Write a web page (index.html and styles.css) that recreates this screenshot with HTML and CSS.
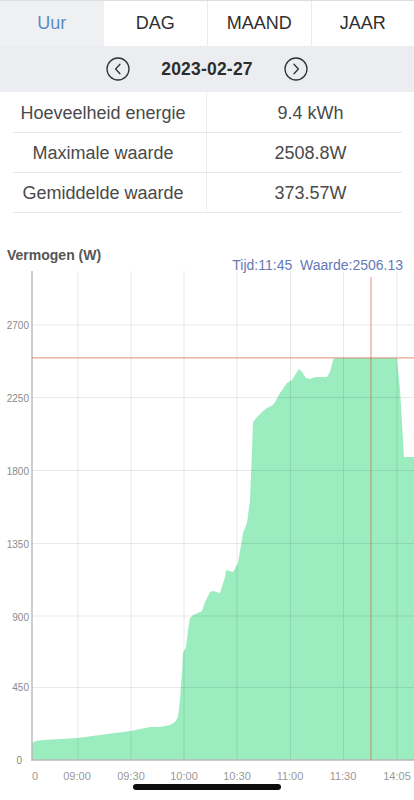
FILE: index.html
```html
<!DOCTYPE html>
<html lang="nl">
<head>
<meta charset="utf-8">
<title>Vermogen</title>
<link rel="stylesheet" href="styles.css">
</head>
<body>
<div class="tabs">
  <div class="tab active">Uur</div>
  <div class="tab">DAG</div>
  <div class="tab sep">MAAND</div>
  <div class="tab sep">JAAR</div>
</div>
<div class="datebar">
  <svg class="nav" viewBox="0 0 24 24" width="24" height="24"><circle cx="12" cy="12" r="11" fill="none" stroke="#333" stroke-width="1.3"/><path d="M14 7.2 L9.6 12 L14 16.8" fill="none" stroke="#333" stroke-width="1.3" stroke-linecap="round" stroke-linejoin="round"/></svg>
  <div class="date">2023-02-27</div>
  <svg class="nav" viewBox="0 0 24 24" width="24" height="24"><circle cx="12" cy="12" r="11" fill="none" stroke="#333" stroke-width="1.3"/><path d="M10 7.2 L14.4 12 L10 16.8" fill="none" stroke="#333" stroke-width="1.3" stroke-linecap="round" stroke-linejoin="round"/></svg>
</div>
<div class="stats">
  <div class="row"><div class="cell label">Hoeveelheid energie</div><div class="cell">9.4 kWh</div></div>
  <div class="row"><div class="cell label">Maximale waarde</div><div class="cell">2508.8W</div></div>
  <div class="row"><div class="cell label">Gemiddelde waarde</div><div class="cell">373.57W</div></div>
</div>
<div class="chart">
  <svg viewBox="0 213 414 587" width="414" height="587">
    <text class="title" x="7" y="260">Vermogen (W)</text>
    <text class="tip" x="403" y="270" text-anchor="end">Tijd:11:45  Waarde:2506.13</text>
    <path class="area" d="M32,760 L32,743 L36,741 L43,740 L60,739 L78,738 L100,735 L115,733 L131,731 L150,727 L160,727 L170,725 L175,722 L178,717 L180,700 L182,673 L183,653 L186,647 L188,630 L190,618 L193,615 L202,611 L205,602 L210,592 L213,591 L220,593 L225,577 L226,570 L233,572 L238,563 L243,533 L247,523 L250,500 L252,450 L253,422 L257,417 L262,412 L267,408 L273,405 L275,402 L280,393 L287,383 L292,380 L297,372 L299,369 L302,372 L306,378 L310,379 L315,377 L322,377 L327,377 L330,372 L333,360 L335,358 L397,358 L400,390 L404,457 L414,457 L414,760 Z"/>
    <g class="grid">
      <line x1="32" y1="325" x2="414" y2="325"/>
      <line x1="32" y1="397.5" x2="414" y2="397.5"/>
      <line x1="32" y1="470.5" x2="414" y2="470.5"/>
      <line x1="32" y1="543.5" x2="414" y2="543.5"/>
      <line x1="32" y1="616" x2="414" y2="616"/>
      <line x1="32" y1="687.5" x2="414" y2="687.5"/>
      <line x1="78" y1="271" x2="78" y2="760"/>
      <line x1="131" y1="271" x2="131" y2="760"/>
      <line x1="184" y1="271" x2="184" y2="760"/>
      <line x1="237" y1="271" x2="237" y2="760"/>
      <line x1="290.5" y1="271" x2="290.5" y2="760"/>
      <line x1="343.5" y1="271" x2="343.5" y2="760"/>
      <line x1="397" y1="271" x2="397" y2="760"/>
    </g>
    <g class="axis">
      <line x1="32" y1="271" x2="32" y2="760.5"/>
      <line x1="31.3" y1="760" x2="414" y2="760"/>
    </g>
    <g class="cross">
      <line x1="32" y1="357.8" x2="414" y2="357.8"/>
      <line x1="371" y1="277" x2="371" y2="760"/>
    </g>
    <g class="ylab">
      <text x="29" y="328.5">2700</text>
      <text x="29" y="401.5">2250</text>
      <text x="29" y="474.5">1800</text>
      <text x="29" y="548">1350</text>
      <text x="29" y="620.5">900</text>
      <text x="29" y="690.5">450</text>
      <text x="22" y="763.5">0</text>
    </g>
    <g class="xlab">
      <text x="35" y="780">0</text>
      <text x="77" y="780">09:00</text>
      <text x="131" y="780">09:30</text>
      <text x="184" y="780">10:00</text>
      <text x="237" y="780">10:30</text>
      <text x="290" y="780">11:00</text>
      <text x="343" y="780">11:30</text>
      <text x="397" y="780">14:05</text>
    </g>
  </svg>
</div>
<div class="home"></div>
</body>
</html>
```
FILE: styles.css
```css
html, body {
  margin: 0;
  padding: 0;
  background: #fff;
  width: 414px;
  height: 800px;
  overflow: hidden;
  font-family: "Liberation Sans", Arial, sans-serif;
}

.tabs {
  display: grid;
  grid-template-columns: repeat(4, 1fr);
  height: 45px;
  border-top: 1px solid #dcdde0;
}

.tab {
  display: flex;
  align-items: center;
  justify-content: center;
  font-size: 18px;
  color: #2f2f2f;
  background: #fff;
}

.tab.active {
  background: #eef0f2;
  color: #5b8cc6;
}

.tab.sep {
  border-left: 1px solid #ececec;
}

.datebar {
  height: 46px;
  background: #ebedf0;
  display: flex;
  align-items: center;
  justify-content: center;
  gap: 31px;
}

.nav {
  display: block;
  width: 24px;
  height: 24px;
}

.date {
  font-size: 17.5px;
  font-weight: bold;
  color: #2c2c2c;
  letter-spacing: 0.2px;
}

.stats {
  margin-top: 1px;
}

.row {
  display: grid;
  grid-template-columns: 207px 207px;
  height: 40px;
  background: linear-gradient(#e6e6e6, #e6e6e6) no-repeat 13px 100% / 389px 1px;
}

.cell {
  display: flex;
  align-items: center;
  justify-content: center;
  padding-top: 1px;
  font-size: 18px;
  color: #4a4a4a;
}

.cell.label {
  border-right: 1px solid #ececec;
}

.chart svg {
  display: block;
}

.title {
  font-size: 14px;
  font-weight: bold;
  fill: #555;
}

.tip {
  font-size: 14px;
  fill: #6479b6;
  white-space: pre;
}

.area {
  fill: #9becbf;
}

.grid line {
  stroke: rgba(0, 0, 0, 0.085);
  stroke-width: 1;
}

.axis line {
  stroke: #b8b8b8;
  stroke-width: 1.4;
}

.cross line {
  stroke: rgb(210, 105, 75);
  stroke-opacity: 0.6;
  stroke-width: 1.2;
}

.ylab text {
  font-size: 10px;
  fill: #8a8a8a;
  text-anchor: end;
}

.xlab text {
  font-size: 11px;
  fill: #999;
  text-anchor: middle;
}

.home {
  position: fixed;
  left: 133px;
  bottom: 10px;
  width: 148px;
  height: 6px;
  border-radius: 3px;
  background: #0d0d0d;
}
```
